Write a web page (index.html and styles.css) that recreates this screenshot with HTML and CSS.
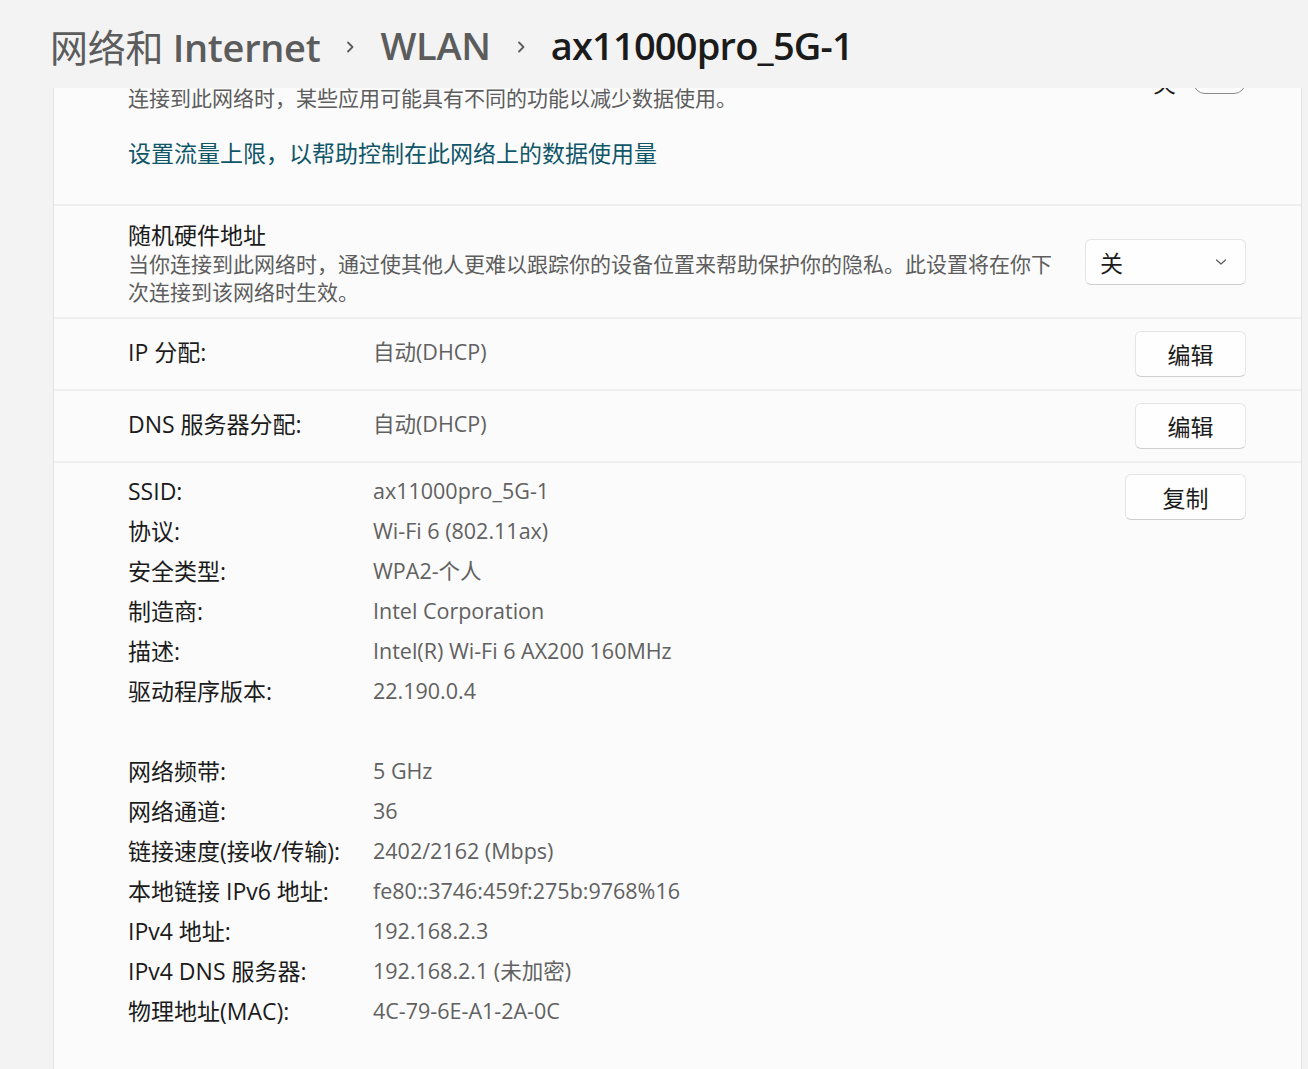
FILE: index.html
```html
<!DOCTYPE html>
<html lang="zh-CN">
<head>
  <meta charset="UTF-8">
  <meta name="viewport" content="width=device-width, initial-scale=1.0">
  <title>ax11000pro_5G-1 属性</title>
  <link rel="stylesheet" href="styles.css">
</head>
<body>
  <header class="page-header">
    <h1 class="breadcrumb">
      <span class="crumb"><span class="cjk">网络和</span> Internet</span>
      <svg class="crumb-sep" width="10" height="16" viewBox="0 0 10 16"><path d="M3 3.5 L7.5 8 L3 12.5" fill="none" stroke="#5c5c5c" stroke-width="1.8" stroke-linecap="round" stroke-linejoin="round"/></svg>
      <span class="crumb">WLAN</span>
      <svg class="crumb-sep" width="10" height="16" viewBox="0 0 10 16"><path d="M3 3.5 L7.5 8 L3 12.5" fill="none" stroke="#5c5c5c" stroke-width="1.8" stroke-linecap="round" stroke-linejoin="round"/></svg>
      <span class="crumb current">ax11000pro_5G-1</span>
    </h1>
  </header>

  <main class="scroller">
    <div class="content">
      <section class="card">

        <!-- metered connection, scrolled partly under the header -->
        <div class="item metered">
          <div class="setting">
            <div class="setting-text">
              <div class="title">按流量计费的连接</div>
              <div class="caption">连接到此网络时，某些应用可能具有不同的功能以减少数据使用。</div>
            </div>
            <div class="toggle">
              <span class="toggle-label">关</span>
              <span class="switch"><span class="knob"></span></span>
            </div>
          </div>
          <a class="link" href="#">设置流量上限，以帮助控制在此网络上的数据使用量</a>
        </div>

        <div class="item random-mac">
          <div class="setting">
            <div class="setting-text">
              <div class="title">随机硬件地址</div>
              <div class="caption">当你连接到此网络时，通过使其他人更难以跟踪你的设备位置来帮助保护你的隐私。此设置将在你下次连接到该网络时生效。</div>
            </div>
            <div class="dropdown">
              <span>关</span>
              <svg width="12" height="8" viewBox="0 0 12 8"><path d="M1.5 2 L6 6 L10.5 2" fill="none" stroke="#5a5a5a" stroke-width="1.2" stroke-linecap="round" stroke-linejoin="round"/></svg>
            </div>
          </div>
        </div>

        <div class="item kv-row">
          <span class="label">IP 分配:</span>
          <span class="value">自动(DHCP)</span>
          <button class="btn">编辑</button>
        </div>

        <div class="item kv-row">
          <span class="label">DNS 服务器分配:</span>
          <span class="value">自动(DHCP)</span>
          <button class="btn">编辑</button>
        </div>

        <div class="item props">
          <dl class="prop-list">
            <dt>SSID:</dt><dd>ax11000pro_5G-1</dd>
            <dt>协议:</dt><dd>Wi-Fi 6 (802.11ax)</dd>
            <dt>安全类型:</dt><dd>WPA2-个人</dd>
            <dt>制造商:</dt><dd>Intel Corporation</dd>
            <dt>描述:</dt><dd>Intel(R) Wi-Fi 6 AX200 160MHz</dd>
            <dt>驱动程序版本:</dt><dd>22.190.0.4</dd>
            <div class="spacer"></div>
            <dt>网络频带:</dt><dd>5 GHz</dd>
            <dt>网络通道:</dt><dd>36</dd>
            <dt>链接速度(接收/传输):</dt><dd>2402/2162 (Mbps)</dd>
            <dt>本地链接 IPv6 地址:</dt><dd>fe80::3746:459f:275b:9768%16</dd>
            <dt>IPv4 地址:</dt><dd>192.168.2.3</dd>
            <dt>IPv4 DNS 服务器:</dt><dd>192.168.2.1 (未加密)</dd>
            <dt>物理地址(MAC):</dt><dd>4C-79-6E-A1-2A-0C</dd>
          </dl>
          <button class="btn copy">复制</button>
        </div>

      </section>
    </div>
  </main>
</body>
</html>
```

FILE: styles.css
```css
html, body {
  height: 100%;
}
body {
  margin: 0;
  display: flex;
  flex-direction: column;
  overflow: hidden;
  background-color: #f3f3f3;
  color: #1b1b1b;
  font-family: 'Open Sans', 'Noto Sans CJK SC', sans-serif;
  font-size: 23px;
}
.page-header {
  flex: none;
  height: 88px;
  padding: 2px 0 0 50px;
  display: flex;
  align-items: center;
  box-sizing: border-box;
  position: relative;
  z-index: 1;
  background-color: #f3f3f3;
}
.breadcrumb {
  margin: 0;
  display: flex;
  align-items: center;
  gap: 25px;
  font-size: 38px;
  font-weight: 600;
  letter-spacing: -0.3px;
  color: #5c5c5c;
}
.breadcrumb .cjk {
  font-weight: 400;
}
.crumb.current {
  color: #1b1b1b;
  letter-spacing: -0.8px;
}
.crumb-sep {
  margin-top: 4px;
}
.scroller {
  flex: 1;
  overflow: hidden;
}
.content {
  margin-top: -48px;
  padding: 0 6px 0 53px;
}
.card {
  border-left: 1px solid #e4e4e4;
  border-right: 1px solid #e4e4e4;
  background-color: #fbfbfb;
}
.item {
  padding: 12px 55px 12px 74px;
}
.item + .item {
  border-top: 2px solid #efefef;
}
.setting {
  display: flex;
  align-items: center;
  gap: 16px;
}
.setting-text {
  flex: 1;
}
.title {
  line-height: 29px;
}
.caption {
  font-size: 21px;
  line-height: 28px;
  color: #5d5d5d;
}
.metered {
  padding-top: 15px;
  padding-bottom: 37px;
}
.link {
  display: block;
  margin-top: 27px;
  line-height: 28px;
  color: #105669;
  text-decoration: none;
}
.toggle {
  display: flex;
  align-items: center;
  gap: 17px;
  margin-top: -4px;
}
.toggle-label {
  margin-left: 3px;
}
.switch {
  width: 46px;
  height: 22px;
  border: 1px solid #8a8a8a;
  border-radius: 12px;
  display: flex;
  align-items: center;
  padding-left: 5px;
}
.knob {
  width: 12px;
  height: 12px;
  border-radius: 50%;
  background-color: #5c5c5c;
}
.random-mac {
  padding-top: 15px;
  padding-bottom: 11px;
}
.dropdown {
  flex: none;
  width: 161px;
  height: 46px;
  box-sizing: border-box;
  padding: 0 18px 0 14px;
  display: flex;
  align-items: center;
  justify-content: space-between;
  background-color: #fefefe;
  border: 1px solid #e5e5e5;
  border-bottom-color: #cfcfcf;
  border-radius: 6px;
  margin-top: -4px;
}
.kv-row {
  display: grid;
  grid-template-columns: 245px 1fr auto;
  align-items: center;
}
.kv-row .label,
.kv-row .value {
  margin-bottom: 7px;
}
.label,
.prop-list dt {
  color: #1b1b1b;
}
.value,
.prop-list dd {
  color: #616161;
  font-size: 21.5px;
}
.btn {
  width: 111px;
  height: 46px;
  box-sizing: border-box;
  background-color: #fefefe;
  border: 1px solid #e5e5e5;
  border-bottom-color: #cfcfcf;
  border-radius: 6px;
  font-family: inherit;
  font-size: 23px;
  color: #1b1b1b;
  padding: 0;
}
.btn.copy {
  width: 121px;
}
.props {
  display: flex;
  align-items: flex-start;
  justify-content: space-between;
  padding-top: 8px;
  padding-bottom: 60px;
}
.props .btn {
  margin-top: 3px;
}
.prop-list {
  margin: 0;
  display: grid;
  grid-template-columns: 245px auto;
  line-height: 40px;
}
.prop-list dd {
  margin: 0;
}
.spacer {
  grid-column: 1 / -1;
  height: 40px;
}
```
